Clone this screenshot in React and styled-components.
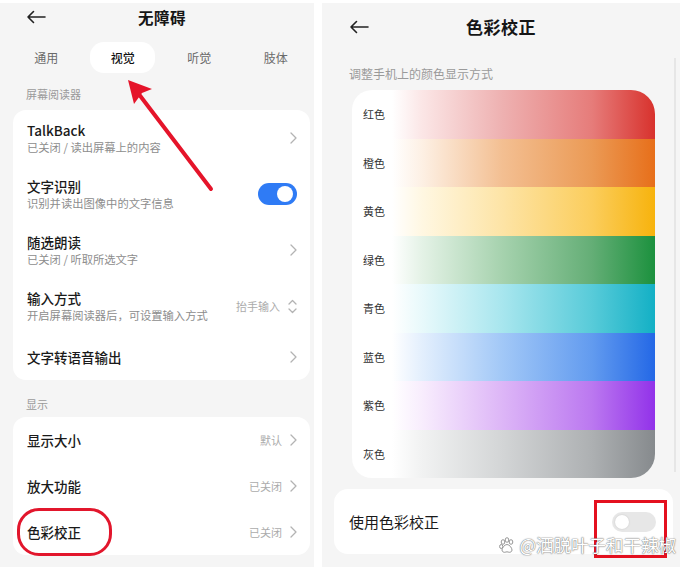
import React from "react";
import styled, { createGlobalStyle } from "styled-components";

const Global = createGlobalStyle`
  html, body { margin: 0; padding: 0; background: #fff; }
  body { font-family: "Noto Sans CJK SC", "Noto Sans", sans-serif; color: #1a1a1a; }
  * { box-sizing: border-box; }
`;

const Page = styled.div`
  display: flex;
  gap: 8px;
  padding-top: 3px;
  width: 684px;
  height: 567px;
  overflow: hidden;
`;

const Panel = styled.section`
  position: relative;
  flex: 0 0 ${(p) => p.$w}px;
  height: 564px;
  background: #f5f5f5;
  display: flex;
  flex-direction: column;
  overflow: hidden;
`;

const Header = styled.header`
  position: relative;
  height: ${(p) => p.$h}px;
  display: flex;
  align-items: center;
  justify-content: center;
  padding-left: ${(p) => p.$pl}px;
`;

const BackBtn = styled.span`
  position: absolute;
  left: ${(p) => p.$left}px;
  top: 50%;
  transform: translateY(-50%);
  display: flex;
`;

const Title = styled.h1`
  margin: 0;
  font-size: ${(p) => p.$size}px;
  font-weight: 700;
  color: #161616;
  letter-spacing: 0.5px;
`;

const Tabs = styled.nav`
  display: grid;
  grid-template-columns: repeat(4, 76.5px);
  margin: 12px 0 0 8px;
  height: 31px;
`;

const Tab = styled.div`
  display: flex;
  align-items: center;
  justify-content: center;
  font-size: 12px;
  color: ${(p) => (p.$active ? "#111" : "#6a6a6a")};
  font-weight: ${(p) => (p.$active ? 500 : 400)};
  span {
    display: flex;
    align-items: center;
    justify-content: center;
    width: 65px;
    height: 31px;
    border-radius: 14px;
    background: ${(p) => (p.$active ? "#fff" : "transparent")};
  }
`;

const SectionLabel = styled.div`
  padding: ${(p) => p.$pt}px 0 ${(p) => p.$pb}px 26px;
  font-size: 11px;
  line-height: 16px;
  color: #9a9a9a;
`;

const Card = styled.div`
  margin: 0 4px 0 13px;
  background: #fff;
  border-radius: 13px;
  display: flex;
  flex-direction: column;
`;

const Row = styled.div`
  height: ${(p) => (p.$tall ? 56 : 46)}px;
  display: flex;
  align-items: center;
  justify-content: space-between;
  padding: 0 13px 0 14px;
`;

const RowText = styled.div`
  display: flex;
  flex-direction: column;
  gap: 1px;
`;

const RowTitle = styled.div`
  font-size: 13.5px;
  line-height: 17px;
  color: #1a1a1a;
  font-weight: 500;
`;

const RowSub = styled.div`
  font-size: 11.3px;
  line-height: 15px;
  color: #8d8d8d;
`;

const RowEnd = styled.div`
  display: flex;
  align-items: center;
  gap: 8px;
  font-size: 11px;
  color: #ababab;
`;

const Switch = styled.span`
  position: relative;
  display: block;
  width: ${(p) => p.$w}px;
  height: ${(p) => p.$h}px;
  border-radius: 12px;
  background: ${(p) => (p.$on ? "#2f7bf5" : "#e7e7e7")};
  &::after {
    content: "";
    position: absolute;
    top: 3px;
    ${(p) => (p.$on ? "right: 4px;" : "left: 3px;")}
    width: ${(p) => p.$h - 6}px;
    height: ${(p) => p.$h - 6}px;
    border-radius: 50%;
    background: #fff;
    box-shadow: ${(p) => (p.$on ? "none" : "0 0 2px rgba(0,0,0,0.15)")};
  }
`;

const Ring = styled.div`
  position: absolute;
  left: 17px;
  top: 505px;
  width: 95px;
  height: 48px;
  border: 3px solid #e2162c;
  border-radius: 22px;
  pointer-events: none;
`;

const ArrowLayer = styled.svg`
  position: absolute;
  left: 0;
  top: 0;
  pointer-events: none;
`;

const Hint = styled.div`
  padding: 16px 0 8px 27px;
  font-size: 12px;
  line-height: 16px;
  color: #9a9a9a;
`;

const Palette = styled.div`
  margin: 0 0 0 30px;
  width: 303px;
  border-radius: 20px 24px 24px 20px;
  overflow: hidden;
  display: flex;
  flex-direction: column;
`;

const Band = styled.div`
  height: 48.5px;
  display: flex;
  align-items: center;
  padding-left: 11px;
  font-size: 11px;
  color: #333;
  background: linear-gradient(
    to right,
    #fff 0px,
    #fff 40px,
    ${(p) => p.$c[0]} 70px,
    ${(p) => p.$c[1]} 150px,
    ${(p) => p.$c[2]} 240px,
    ${(p) => p.$c[3]} 303px
  );
`;

const ToggleCard = styled.div`
  margin: 11px 7px 0 12px;
  height: 65px;
  background: #fff;
  border-radius: 14px;
  display: flex;
  align-items: center;
  justify-content: space-between;
  padding: 0 17px 0 15px;
  font-size: 15px;
  color: #1a1a1a;
`;

const Marked = styled.div`
  position: relative;
  &::before {
    content: "";
    position: absolute;
    left: -18px;
    right: -11px;
    top: -12px;
    bottom: -26px;
    border: 3.5px solid #e4101f;
  }
`;

const ScrollTrack = styled.div`
  position: absolute;
  left: 352px;
  top: 55px;
  width: 2px;
  height: 414px;
  background: #e6e6e6;
`;

const Watermark = styled.div`
  position: absolute;
  right: 4px;
  bottom: 12px;
  display: flex;
  align-items: center;
  gap: 3px;
  font-size: 17.5px;
  line-height: 20px;
  color: #fff;
  text-shadow: 0 0 1px #7d7d7d, 0 0 1px #7d7d7d, 0 0 2px rgba(0, 0, 0, 0.25);
  white-space: nowrap;
`;

const Back = () => (
  <svg width="20" height="14" viewBox="0 0 20 14">
    <path d="M19 7H2M7.5 1.5L2 7l5.5 5.5" fill="none" stroke="#222" strokeWidth="1.6" strokeLinecap="round" strokeLinejoin="round" />
  </svg>
);

const Chevron = () => (
  <svg width="7" height="12" viewBox="0 0 7 12">
    <path d="M1 1l5 5-5 5" fill="none" stroke="#b3b3b3" strokeWidth="1.3" strokeLinecap="round" strokeLinejoin="round" />
  </svg>
);

const UpDown = () => (
  <svg width="9" height="15" viewBox="0 0 9 15">
    <path d="M1 5l3.5-3.5L8 5M1 10l3.5 3.5L8 10" fill="none" stroke="#b3b3b3" strokeWidth="1.3" strokeLinecap="round" strokeLinejoin="round" />
  </svg>
);

const Paw = () => (
  <svg width="18" height="18" viewBox="0 0 18 18">
    <g fill="#fff" stroke="#8a8a8a" strokeWidth="0.9">
      <ellipse cx="5" cy="6" rx="1.8" ry="2.3" />
      <ellipse cx="9" cy="4" rx="1.8" ry="2.3" />
      <ellipse cx="13" cy="6" rx="1.8" ry="2.3" />
      <ellipse cx="3.2" cy="10.5" rx="1.6" ry="2" />
      <path d="M9 8.5c2.5 0 5 3.5 5 5.5 0 1.7-1.5 2.3-2.6 2.3-1 0-1.6-.5-2.4-.5s-1.4.5-2.4.5C5.5 16.3 4 15.7 4 14c0-2 2.5-5.5 5-5.5z" />
    </g>
  </svg>
);

const rows = [
  { title: "TalkBack", sub: "已关闭 / 读出屏幕上的内容", end: "chevron" },
  { title: "文字识别", sub: "识别并读出图像中的文字信息", end: "switch" },
  { title: "随选朗读", sub: "已关闭 / 听取所选文字", end: "chevron" },
  { title: "输入方式", sub: "开启屏幕阅读器后，可设置输入方式", end: "updown", value: "抬手输入" },
  { title: "文字转语音输出", end: "chevron" },
];

const displayRows = [
  { title: "显示大小", value: "默认" },
  { title: "放大功能", value: "已关闭" },
  { title: "色彩校正", value: "已关闭" },
];

const bands = [
  { name: "红色", c: ["#fbe6e6", "#eeb1b1", "#e67c7a", "#d8322d"] },
  { name: "橙色", c: ["#fdf0e4", "#f3bf92", "#eb9a55", "#e76f1a"] },
  { name: "黄色", c: ["#fff7e2", "#fde4a6", "#fbcd5c", "#f7b30d"] },
  { name: "绿色", c: ["#e4f2e6", "#a6d2ae", "#64ae76", "#1c913e"] },
  { name: "青色", c: ["#e8f9fb", "#a8e6ee", "#58cbd9", "#13b0c5"] },
  { name: "蓝色", c: ["#e3effd", "#a2c8f7", "#629bef", "#2468e6"] },
  { name: "紫色", c: ["#f8edfd", "#ddb6f7", "#bb78f0", "#9232e9"] },
  { name: "灰色", c: ["#f1f2f2", "#d3d5d6", "#adb0b2", "#868a8d"] },
];

const tabs = ["通用", "视觉", "听觉", "肢体"];

export default function App() {
  return (
    <>
      <Global />
      <Page>
        <Panel $w={314}>
          <Header $h={27} $pl={10}>
            <BackBtn $left={26}>
              <Back />
            </BackBtn>
            <Title $size={15.5}>无障碍</Title>
          </Header>
          <Tabs>
            {tabs.map((t, i) => (
              <Tab key={t} $active={i === 1}>
                <span>{t}</span>
              </Tab>
            ))}
          </Tabs>
          <SectionLabel $pt={13} $pb={8}>屏幕阅读器</SectionLabel>
          <Card>
            {rows.map((r) => (
              <Row key={r.title} $tall={!!r.sub}>
                <RowText>
                  <RowTitle>{r.title}</RowTitle>
                  {r.sub && <RowSub>{r.sub}</RowSub>}
                </RowText>
                <RowEnd>
                  {r.value && <span>{r.value}</span>}
                  {r.end === "chevron" && <Chevron />}
                  {r.end === "updown" && <UpDown />}
                  {r.end === "switch" && <Switch $on $w={39} $h={22} />}
                </RowEnd>
              </Row>
            ))}
          </Card>
          <SectionLabel $pt={16} $pb={5}>显示</SectionLabel>
          <Card>
            {displayRows.map((r) => (
              <Row key={r.title}>
                <RowTitle>{r.title}</RowTitle>
                <RowEnd>
                  <span>{r.value}</span>
                  <Chevron />
                </RowEnd>
              </Row>
            ))}
          </Card>
          <Ring />
          <ArrowLayer width="314" height="564" viewBox="0 0 314 564">
            <line x1="211" y1="186" x2="138" y2="90" stroke="#e5142a" strokeWidth="4" strokeLinecap="round" />
            <polygon points="128,77 152,86 142,90 134,101" fill="#e5142a" />
          </ArrowLayer>
        </Panel>

        <Panel $w={358}>
          <Header $h={47} $pl={0}>
            <BackBtn $left={27}>
              <Back />
            </BackBtn>
            <Title $size={17}>色彩校正</Title>
          </Header>
          <Hint>调整手机上的颜色显示方式</Hint>
          <Palette>
            {bands.map((b) => (
              <Band key={b.name} $c={b.c}>
                {b.name}
              </Band>
            ))}
          </Palette>
          <ToggleCard>
            <span>使用色彩校正</span>
            <Marked>
              <Switch $w={44} $h={20} />
            </Marked>
          </ToggleCard>
          <ScrollTrack />
          <Watermark>
            <Paw />
            <span>@洒脱叶子和干辣椒</span>
          </Watermark>
        </Panel>
      </Page>
    </>
  );
}
